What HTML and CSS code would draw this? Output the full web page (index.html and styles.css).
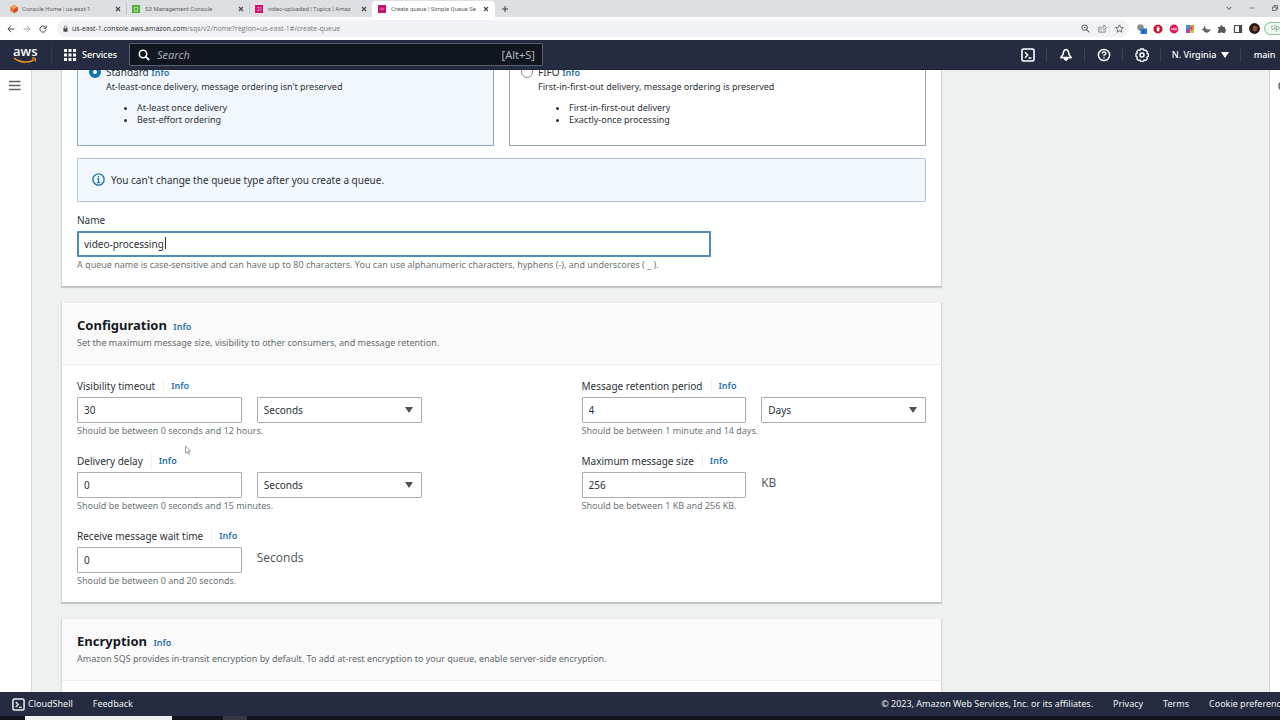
FILE: index.html
```html
<!DOCTYPE html>
<html lang="en">
<head>
<meta charset="utf-8">
<title>Create queue | Simple Queue Service</title>
<link rel="stylesheet" href="styles.css">
</head>
<body>
<svg width="0" height="0" class="defs" aria-hidden="true">
  <symbol id="x" viewBox="0 0 6 6"><path d="M1 1l4 4M5 1L1 5" stroke="#45474b" stroke-width="1.1"/></symbol>
  <symbol id="shell" viewBox="0 0 14 14"><rect x="1" y="1" width="12" height="12" rx="1.6" fill="none" stroke="currentColor" stroke-width="1.6"/><path d="M4 4.3L6.7 7 4 9.7M7.5 10H10.4" fill="none" stroke="currentColor" stroke-width="1.4"/></symbol>
</svg>

<div class="tabs">
  <div class="tab tab-first">
    <svg class="fav" viewBox="0 0 8 8"><path d="M4 0l3.6 2v4L4 8 .4 6V2z" fill="#e8702a"/><path d="M4 0l3.6 2L4 4 .4 2z" fill="#f5a35c"/><path d="M4 4l3.6-2v4L4 8z" fill="#cf4c20"/></svg>
    <span class="tab-title">Console Home | us-east-1</span>
    <button class="close" aria-label="Close tab"><svg><use href="#x"/></svg></button>
  </div>
  <div class="tab">
    <svg class="fav" viewBox="0 0 8 8"><rect width="8" height="8" fill="#4fae33"/><path d="M2 2.2h4L5.4 6.2H2.6z" fill="none" stroke="#c9f0b8" stroke-width=".8"/></svg>
    <span class="tab-title">S3 Management Console</span>
    <button class="close" aria-label="Close tab"><svg><use href="#x"/></svg></button>
  </div>
  <div class="tab">
    <svg class="fav" viewBox="0 0 8 8"><rect width="8" height="8" fill="#d01570"/><path d="M2 2.5h2v3H2M5 2.5h1.3M5 4h1.3M5 5.5h1.3" fill="none" stroke="#f7a8cf" stroke-width=".7"/></svg>
    <span class="tab-title">video-uploaded | Topics | Amaz</span>
    <button class="close" aria-label="Close tab"><svg><use href="#x"/></svg></button>
  </div>
  <div class="tab active">
    <svg class="fav" viewBox="0 0 8 8"><rect width="8" height="8" fill="#c4126f"/><path d="M1.8 4h4.4M3 2.6v2.8M5 2.6v2.8" fill="none" stroke="#ef72b4" stroke-width=".7"/></svg>
    <span class="tab-title">Create queue | Simple Queue Se</span>
    <button class="close" aria-label="Close tab"><svg><use href="#x"/></svg></button>
  </div>
  <button class="new-tab" aria-label="New tab"><svg viewBox="0 0 8 8"><path d="M4 1v6M1 4h6" stroke="#3c4043"/></svg></button>
  <div class="window-controls">
    <svg viewBox="0 0 6 6"><path d="M.7 1.8L3 4.5l2.300-2.700" fill="none" stroke="#555"/></svg>
    <svg viewBox="0 0 6 6"><path d="M.5 3h5" stroke="#777" stroke-width=".8"/></svg>
    <svg viewBox="0 0 6 6"><path d="M.5 2h3.700v3.500H.5zM2 2V.6h3.500v3.400H4.200" fill="none" stroke="#555" stroke-width=".8"/></svg>
  </div>
</div>

<div class="toolbar">
  <button aria-label="Back"><svg viewBox="0 0 8 8"><path d="M7.500 4H1M4 .8L.9 4 4 7.200" fill="none" stroke="#45484c"/></svg></button>
  <button aria-label="Forward"><svg viewBox="0 0 8 8"><path d="M.5 4H7M4 .8L7.100 4 4 7.200" fill="none" stroke="#a5a7aa"/></svg></button>
  <button aria-label="Reload"><svg viewBox="0 0 8 8"><path d="M6.700 2.500A3.100 3.100 0 1 0 7.100 4.500M7.200.6v2.600H4.600" fill="none" stroke="#45484c"/></svg></button>
  <div class="address">
    <svg viewBox="0 0 6 8"><rect x=".5" y="3" width="5" height="4.300" rx=".5" fill="#4a4d51"/><path d="M1.500 3.200V2a1.500 1.500 0 0 1 3 0v1.200" fill="none" stroke="#4a4d51" stroke-width=".9"/></svg>
    <span class="url"><b>us-east-1.console.aws.amazon.com</b>/sqs/v2/home?region=us-east-1#/create-queue</span>
    <svg class="s8" viewBox="0 0 8 8"><circle cx="3.200" cy="3.200" r="2.400" fill="none" stroke="#5f6368" stroke-width=".9"/><path d="M5 5l2.500 2.500M2.200 3.200h2" stroke="#5f6368" stroke-width=".9"/></svg>
    <svg class="s8" viewBox="0 0 8 8"><path d="M2.500 2.800H.8v4.400h5.700V5.500M2.300 5.300C2.600 3.500 3.600 2.700 5.200 2.600V1l2.300 2.300-2.300 2V3.900" fill="none" stroke="#7b7e82" stroke-width=".8"/></svg>
    <svg class="s8" viewBox="0 0 8 8"><path d="M4 .8l1 2.200 2.400.3-1.800 1.600.5 2.400L4 6.100 1.900 7.300l.5-2.400L.6 3.300 3 3z" fill="none" stroke="#5f6368" stroke-width=".8"/></svg>
  </div>
  <div class="extensions">
    <svg viewBox="0 0 10 10"><circle cx="3.500" cy="3.500" r="3.200" fill="#8a9287"/><rect x="3.500" y="4.500" width="6.500" height="5.500" fill="#2f73d2"/><path d="M6.700 6v2.600" stroke="#164f9e"/></svg>
    <svg viewBox="0 0 10 10"><path d="M3.200.8h3.600l2.600 2.500v3.500L6.800 9.300H3.200L.6 6.800V3.300z" fill="#c8102e"/><path d="M3.800 4h2.600v2.200q0 1.300-1.300 1.300T3.700 6.200z" fill="#fff"/><path d="M4.200 4.500V2.500M5.200 4.500V2.100M6.100 4.500V2.700" stroke="#fff" stroke-width=".7"/></svg>
    <svg viewBox="0 0 10 10"><circle cx="5" cy="5" r="4.400" fill="#d81558"/><path d="M2 6l.8-2 .8 2M4.300 4v2h1V4zM6.300 6V4h1.300v2z" fill="none" stroke="#ffd2e3" stroke-width=".7"/></svg>
    <svg viewBox="0 0 10 10"><path d="M1 1h4v4H1z" fill="#3e8fd8"/><path d="M5 1h4v4H5z" fill="#eb8b3a"/><path d="M1 5h4v4H1z" fill="#9b4fc5"/><path d="M5 5h4v4H5z" fill="#e9bf4c"/><path d="M3 7l3.500-4 .5 4" fill="none" stroke="#b13865"/></svg>
    <svg viewBox="0 0 10 10"><path d="M4.500 1a3 3 0 0 0 .3 3.600Q7 6.500 9.500 4.800A3.800 3.800 0 0 1 3.500 8L.8 5l2-.5Q2.800 2 4.500 1z" fill="#63676b"/></svg>
    <svg viewBox="0 0 10 10"><path d="M1 3h2.300a1.300 1.300 0 1 1 2.500 0H8v2.200a1.200 1.200 0 1 1 0 2.400V9H5.600a1.200 1.200 0 0 0-2.300 0H1V6.600a1.200 1.200 0 0 0 0-2.300z" fill="#53575b"/></svg>
    <svg viewBox="0 0 10 10"><path d="M1.500 1.500h7v7h-7z" fill="none" stroke="#45484c" stroke-width="1.200"/><path d="M6 1.500h2.500v7H6z" fill="#45484c"/></svg>
    <svg class="avatar" viewBox="0 0 11 11"><circle cx="5.500" cy="5.500" r="5.400" fill="#2b1714"/><ellipse cx="6" cy="5.300" rx="2.400" ry="3.100" fill="#8c5142"/><path d="M3 4q2-3 5-1L7.500 1 4 1z" fill="#1c0f0d"/></svg>
  </div>
  <button class="update">Update</button>
</div>

<header class="nav">
  <a class="logo" href="#" aria-label="AWS home"><span>aws</span><svg viewBox="0 0 24 7"><path d="M1 1.200C7 6 16 6.200 21.300 2.700" fill="none" stroke="#f39321" stroke-width="1.500"/><path d="M18.800 1.200c3-.8 4.500-.3 3.300 3.300" fill="none" stroke="#f39321" stroke-width="1.200"/></svg></a>
  <button class="services"><svg viewBox="0 0 12 12" fill="#fff"><path d="M0 0h3v3H0zM4.500 0h3v3h-3zM9 0h3v3H9zM0 4.500h3v3H0zM4.500 4.500h3v3h-3zM9 4.500h3v3H9zM0 9h3v3H0zM4.500 9h3v3h-3zM9 9h3v3H9z"/></svg>Services</button>
  <label class="search"><svg viewBox="0 0 12 12"><circle cx="5" cy="5" r="3.700" fill="none" stroke="#fff" stroke-width="1.500"/><path d="M7.700 7.700l3.500 3.500" stroke="#fff" stroke-width="1.700"/></svg><input type="search" placeholder="Search" aria-label="Search"><span>[Alt+S]</span></label>
  <div class="nav-right">
    <button class="icon" aria-label="CloudShell"><svg viewBox="0 0 14 14"><use href="#shell"/></svg></button>
    <button class="icon" aria-label="Notifications"><svg viewBox="0 0 14 14"><path d="M7 1.500C4.500 2 4.200 4 4 6.500L1.800 9.600h10.400L10 6.500C9.800 4 9.500 2 7 1.500z" fill="none" stroke="#fff" stroke-width="1.600" stroke-linejoin="round"/><path d="M5 10h4v1.300l-2 1.900-2-1.900z" fill="#fff"/></svg></button>
    <button class="icon" aria-label="Help"><svg viewBox="0 0 14 14"><circle cx="7" cy="7" r="5.600" fill="none" stroke="#fff" stroke-width="1.500"/><path d="M5 5.600Q5.200 4 7 4t2 1.500Q9 6.500 7 7.200v1.100M7 9.100v1.400" fill="none" stroke="#fff" stroke-width="1.300"/></svg></button>
    <button class="icon" aria-label="Settings"><svg viewBox="0 0 14 14"><path d="M5.600 1h2.800l.6 1.500 1.700-.4 1.700 1.700-.4 1.600 1.300.5v2.600l-1.500.8.5 1.600-1.500 1.500-1.700-.4-.9 1.500H5.700L5 12l-1.700.4-1.500-1.500.5-1.700L1 8.400V5.700l1.300-.6-.5-1.500L3.500 2l1.500.5z" fill="none" stroke="#fff" stroke-width="1.300"/><circle cx="7" cy="7" r="2" fill="none" stroke="#fff" stroke-width="1.500"/></svg></button>
    <button class="region">N. Virginia<i class="caret"></i></button>
    <button class="account">main</button>
  </div>
</header>

<div class="workspace">
  <aside class="rail"><button aria-label="Open navigation"><svg viewBox="0 0 12 11"><path d="M0 1.500h11.500M0 5.500h11.500M0 9.500h11.500" stroke="#596166" stroke-width="1.500"/></svg></button></aside>
  <main class="scroll">
    <div class="content">
      <section class="panel details">
        <div class="tiles">
          <label class="tile selected"><input type="radio" name="type" checked>
            <span class="tile-text"><span class="tile-name">Standard <a href="#">Info</a></span><span class="tile-desc">At-least-once delivery, message ordering isn't preserved</span>
            <span class="bullets"><span>At-least once delivery</span><span>Best-effort ordering</span></span></span>
          </label>
          <label class="tile"><input type="radio" name="type">
            <span class="tile-text"><span class="tile-name">FIFO <a href="#">Info</a></span><span class="tile-desc">First-in-first-out delivery, message ordering is preserved</span>
            <span class="bullets"><span>First-in-first-out delivery</span><span>Exactly-once processing</span></span></span>
          </label>
        </div>
        <div class="alert"><svg viewBox="0 0 12 12"><circle cx="6" cy="6" r="5.200" fill="none" stroke="#1878ac" stroke-width="1.300"/><path d="M6 2.700v1.500M4.800 5.500H6v3.300M4.600 8.800h2.800" fill="none" stroke="#1878ac" stroke-width="1.200"/></svg>You can't change the queue type after you create a queue.</div>
        <div class="field name-field">
          <div class="label-row"><label for="name">Name</label></div>
          <input id="name" class="focused" type="text" value="video-processing">
          <i class="text-cursor"></i>
          <p class="hint">A queue name is case-sensitive and can have up to 80 characters. You can use alphanumeric characters, hyphens (-), and underscores ( _ ).</p>
        </div>
      </section>

      <section class="panel">
        <div class="panel-head"><h2>Configuration <a href="#">Info</a></h2><p>Set the maximum message size, visibility to other consumers, and message retention.</p></div>
        <div class="config">
          <div class="field">
            <div class="label-row"><label for="vis">Visibility timeout</label><a href="#">Info</a></div>
            <div class="pair"><input id="vis" type="text" value="30"><span class="select"><select aria-label="Visibility timeout unit"><option>Seconds</option></select></span></div>
            <p class="hint">Should be between 0 seconds and 12 hours.</p>
          </div>
          <div class="field">
            <div class="label-row"><label for="ret">Message retention period</label><a href="#">Info</a></div>
            <div class="pair"><input id="ret" type="text" value="4"><span class="select"><select aria-label="Retention unit"><option>Days</option></select></span></div>
            <p class="hint">Should be between 1 minute and 14 days.</p>
          </div>
          <div class="field">
            <div class="label-row"><label for="delay">Delivery delay</label><a href="#">Info</a></div>
            <div class="pair"><input id="delay" type="text" value="0"><span class="select"><select aria-label="Delivery delay unit"><option>Seconds</option></select></span></div>
            <p class="hint">Should be between 0 seconds and 15 minutes.</p>
          </div>
          <div class="field">
            <div class="label-row"><label for="size">Maximum message size</label><a href="#">Info</a></div>
            <div class="pair"><input id="size" type="text" value="256"><span class="unit">KB</span></div>
            <p class="hint">Should be between 1 KB and 256 KB.</p>
          </div>
          <div class="field">
            <div class="label-row"><label for="wait">Receive message wait time</label><a href="#">Info</a></div>
            <div class="pair"><input id="wait" type="text" value="0"><span class="unit">Seconds</span></div>
            <p class="hint">Should be between 0 and 20 seconds.</p>
          </div>
        </div>
      </section>

      <section class="panel">
        <div class="panel-head"><h2>Encryption <a href="#">Info</a></h2><p>Amazon SQS provides in-transit encryption by default. To add at-rest encryption to your queue, enable server-side encryption.</p></div>
        <div class="config"></div>
      </section>
    </div>
  </main>
  <aside class="info-rail"><svg viewBox="0 0 12 12"><circle cx="6" cy="6" r="5" fill="none" stroke="#596166" stroke-width="1.500"/></svg></aside>
</div>

<footer class="footer">
  <button><svg viewBox="0 0 14 14"><use href="#shell"/></svg>CloudShell</button>
  <a class="feedback" href="#">Feedback</a>
  <span class="copyright">© 2023, Amazon Web Services, Inc. or its affiliates.</span>
  <a href="#">Privacy</a><a href="#">Terms</a><a class="cookies" href="#">Cookie preferences</a>
</footer>
<div class="taskbar"><i class="task-search"></i><i class="task-item"></i></div>
<svg class="pointer" viewBox="0 0 6 10"><path d="M.6.8v7.400l1.700-1.500 1.200 2.500 1.100-.5-1.100-2.500h2z" fill="#fff" stroke="#777" stroke-width=".7"/></svg>
</body>
</html>
```
FILE: styles.css
```css
* { box-sizing: border-box; }
body {
  margin: 0;
  height: 100vh;
  display: flex;
  flex-direction: column;
  overflow: hidden;
  font: 10px/14px "Noto Sans", "Open Sans", sans-serif;
  color: #2b3137;
  background: #eff0f0;
}
button { border: 0; padding: 0; margin: 0; background: none; color: inherit; font: inherit; display: flex; align-items: center; }
a { color: #2670a8; text-decoration: none; }
p, h2 { margin: 0; }
svg { flex: none; display: block; }
.defs { position: absolute; }

/* browser window */
.tabs { display: flex; height: 17px; flex: none; background: #dedfe3; font: 6px/8px Roboto, sans-serif; color: #606368; }
.tab { display: flex; align-items: center; width: 123px; padding: 0 5px; gap: 5px; border-left: 1px solid #c3c5c9; margin: 3px 0; }
.tab-first { width: 126px; border-left: 0; padding-left: 10px; gap: 4px; }
.tab .fav { width: 8px; height: 8px; }
.tab-title { flex: 1; min-width: 0; white-space: nowrap; }
.close svg { width: 6px; height: 6px; }
.active { margin: 1px 0 0; background: #fff; border: 0; border-radius: 4px 4px 0 0; padding: 0 6px; }
.new-tab { margin-left: 6px; }
.new-tab svg { width: 8px; height: 8px; }
.window-controls { display: flex; align-items: center; gap: 17px; margin-left: auto; padding: 0 2px 2px 0; }
.window-controls svg { width: 6px; height: 6px; }
.toolbar { display: flex; align-items: center; height: 23px; flex: none; gap: 8px; padding-left: 7px; background: #fff; overflow: hidden; }
.toolbar > button svg { width: 8px; height: 8px; }
.address { flex: 1; display: flex; align-items: center; gap: 8px; height: 17px; margin-left: 2px; padding: 0 5px 0 6px; border-radius: 9px; background: #f1f2f5; color: #74777b; font: 7px/9px "Open Sans", sans-serif; }
.address b { font-weight: 400; color: #292b2f; }
.address svg { width: 5px; height: 8px; }
.address .s8 { width: 9px; height: 9px; }
.url { flex: 1; margin-left: -4px; white-space: nowrap; }
.extensions { display: flex; align-items: center; gap: 6px; }
.extensions svg { width: 10px; height: 10px; }
.extensions .avatar { width: 11px; height: 11px; }
.toolbar .update { flex: none; width: 16px; height: 13px; margin-left: -4px; padding-left: 6px; border: 1px solid #8ac29a; border-right: 0; border-radius: 7px 0 0 7px; background: #eef8f0; color: #6d9f7a; font: 7px/9px Roboto, sans-serif; overflow: hidden; }

/* console header */
.nav { display: flex; align-items: center; height: 30px; flex: none; background: #252c41; color: #fff; border-bottom: 1px solid #1d2433; }
.logo { display: flex; flex-direction: column; color: #fff; width: 52px; padding-left: 13px; border-right: 1px solid #30374a; }
.logo span { font: 600 13px/12px "Open Sans", sans-serif; }
.logo svg { width: 24px; height: 7px; }
.services { gap: 6px; width: 77px; padding-left: 12px; font: 500 9px/14px "Noto Sans", sans-serif; }
.services svg { width: 12px; height: 12px; }
.search { display: flex; align-items: center; width: 414px; height: 23px; padding: 0 7px 0 8px; gap: 5px; border: 1px solid #5b626e; background: #11161f; border-radius: 1px; }
.search svg { width: 12px; height: 12px; }
.search input { flex: 1; min-width: 0; border: 0; outline: 0; background: none; font: italic 11px/15px "Noto Sans", sans-serif; color: #fff; }
.search input::placeholder { color: #a6abb2; opacity: 1; }
.search span { color: #b2b7be; font: 11px/15px "Noto Sans", sans-serif; }
.nav-right { display: flex; margin-left: auto; }
.nav-right button { height: 14px; border-left: 1px solid #3b4255; justify-content: center; white-space: nowrap; font: 500 9px/14px "Noto Sans", sans-serif; }
.nav-right .icon { width: 38px; }
.nav-right .icon:first-child { border-color: transparent; }
.icon svg { width: 14px; height: 14px; }
.nav-right .region { width: 80px; gap: 5px; }
.nav-right .account { width: 40px; padding-left: 8px; }
.caret { border: 4px solid transparent; border-top: 6px solid #fff; border-bottom: 0; }

/* page */
.workspace { flex: 1; min-height: 0; display: flex; }
.rail { width: 32px; flex: none; background: #fff; border-right: 1px solid #d3d6d6; padding: 10px 0 0 9px; }
.rail svg { width: 12px; height: 11px; }
.info-rail { width: 11px; flex: none; background: #fff; border-left: 1px solid #cfd2d2; overflow: hidden; padding: 10px 0 0 8px; }
.info-rail svg { width: 12px; height: 12px; }
.scroll { flex: 1; min-width: 0; overflow: hidden; padding-left: 29px; }
.content { max-width: 881px; display: flex; flex-direction: column; gap: 15px; margin-top: -8px; }
.panel { background: #fff; border: 1px solid #d7dada; border-top-color: #eceeee; border-bottom-color: #b9bdbd; box-shadow: 0 1px 1px #c9cccc; }
.details { border-top: 0; padding: 0 15px 14px; }
.tiles { display: grid; grid-template-columns: 1fr 1fr; gap: 15px; }
.tile { display: flex; height: 84px; padding: 3px 11px; gap: 5px; border: 1px solid #9ba7b3; border-top: 0; border-radius: 1px; }
.tile.selected { background: #f1f7fd; border-color: #8aa9c6; }
.tile input { appearance: none; flex: none; width: 12px; height: 12px; margin: 1px 0 0; border: 1px solid #858e93; border-radius: 50%; background: #fff; }
.tile input:checked { border: 4px solid #1475b5; }
.tile-text, .tile-name, .tile-desc { display: block; }
.tile-name a { font: 600 9px/12px "Noto Sans", sans-serif; }
.tile-desc { font-size: 9px; line-height: 16px; }
.bullets { display: block; margin-top: 7px; padding-left: 31px; font-size: 9px; line-height: 12px; }
.bullets span { display: list-item; list-style: disc; }
.alert { display: flex; align-items: center; gap: 6px; height: 44px; margin: 12px 0 11px; padding: 0 14px 1px; border: 1px solid #b2c5da; background: #f1f7fd; border-radius: 1px; }
.alert svg { width: 13px; height: 13px; }
.name-field { position: relative; }
.name-field input { max-width: 634px; }
.text-cursor { position: absolute; left: 88px; top: 24px; width: 1px; height: 12px; background: #333; }
input[type="text"], select { display: block; width: 100%; height: 26px; padding: 0 6px; border: 1px solid #a9adad; border-radius: 1px; background: #fff; color: #2b3137; font: inherit; outline: 0; }
input.focused { border: 2px solid #4a90bf; padding: 0 5px; }
.hint { margin-top: 1px; font-size: 9px; line-height: 14px; color: #6c7478; white-space: nowrap; }
.panel-head { height: 62px; padding: 13px 15px; background: #fafafa; border-bottom: 1px solid #ebeded; }
.panel-head h2 { font-size: 13px; line-height: 18px; color: #16191f; }
.panel-head h2 a { font-size: 9px; line-height: 12px; margin-left: 3px; font-weight: 600; }
.panel-head p { font-size: 9px; line-height: 18px; color: #626a6e; }
.config { display: grid; grid-template-columns: 1fr 1fr; gap: 16px 160px; padding: 14px 15px; }
.label-row { display: flex; align-items: center; height: 18px; padding-bottom: 4px; }
.label-row a { margin-left: 8px; padding-left: 7px; border-left: 1px solid #eff1f1; font-size: 9px; font-weight: 600; }
.pair { display: grid; grid-template-columns: 1fr 1fr; gap: 15px; }
.select { position: relative; }
.select::after { content: ""; position: absolute; right: 9px; top: 10px; border: 4px solid transparent; border-top: 6px solid #4b5155; border-bottom: 0; pointer-events: none; }
select { appearance: none; }
.unit { font: 12px/22px "Open Sans", sans-serif; color: #4b5358; }

/* bottom bars */
.footer { display: flex; align-items: center; flex: none; height: 24px; padding-left: 12px; gap: 20px; background: #252c41; color: #eef0f3; overflow: hidden; font-size: 9px; white-space: nowrap; }
.footer a { color: inherit; }
.footer button { gap: 3px; }
.footer svg { width: 13px; height: 13px; }
.copyright { margin-left: auto; }
.footer .cookies { flex: none; width: 71px; }
.taskbar { display: flex; flex: none; height: 4px; background: #11131d; padding-left: 25px; }
.task-search { width: 147px; background: #f1f1f1; }
.task-item { width: 24px; margin-left: 51px; background: #363943; }
.pointer { position: absolute; left: 185px; top: 445px; width: 6px; height: 10px; }
```
